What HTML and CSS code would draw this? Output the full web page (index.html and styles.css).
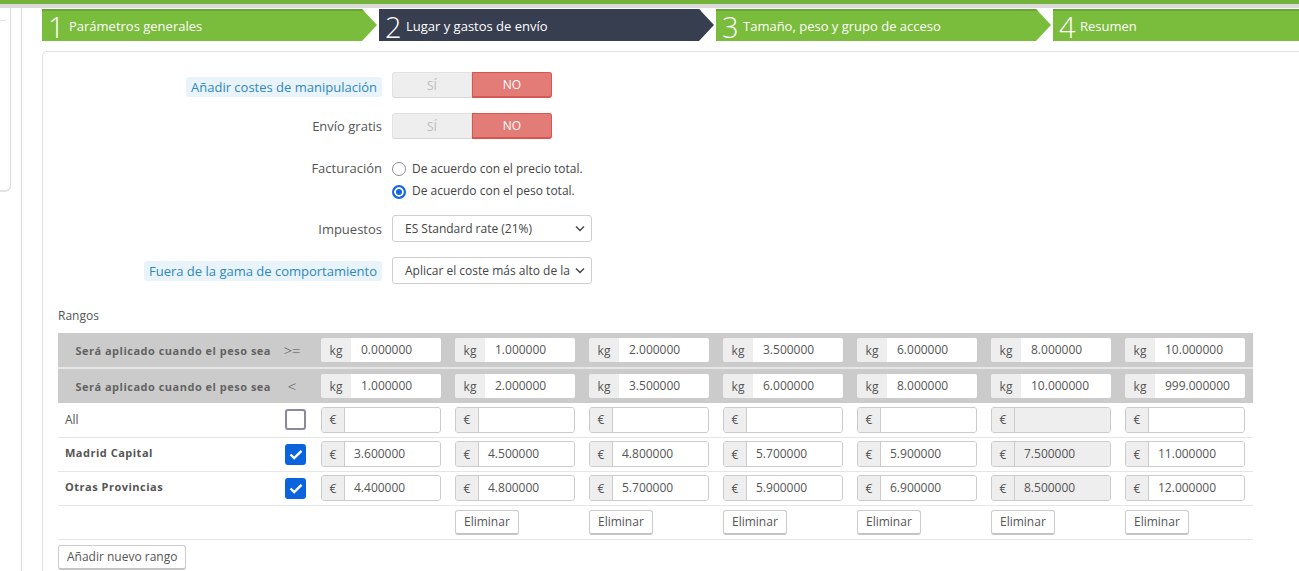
FILE: index.html
```html
<!DOCTYPE html>
<html lang="es">
<head>
<meta charset="utf-8">
<title>Transportista</title>
<link rel="stylesheet" href="styles.css">
</head>
<body>
<div class="topbar"></div>
<div class="page">
  <aside class="sidebar">
    <div class="side-panel"><div class="side-line"></div></div>
    <div class="side-rule"></div>
  </aside>
  <main class="main">
    <nav class="steps">
      <div class="step"><span class="num">1</span><span class="stxt">Parámetros generales</span></div>
      <div class="step active"><span class="num">2</span><span class="stxt">Lugar y gastos de envío</span></div>
      <div class="step"><span class="num">3</span><span class="stxt">Tamaño, peso y grupo de acceso</span></div>
      <div class="step last"><span class="num">4</span><span class="stxt">Resumen</span></div>
    </nav>
    <section class="panel">
      <div class="form">
        <div class="row r-toggle1">
          <div class="lbl"><span class="hint">Añadir costes de manipulación</span></div>
          <div class="ctl"><div class="toggle"><span class="yes">SÍ</span><span class="no">NO</span></div></div>
        </div>
        <div class="row r-toggle2">
          <div class="lbl">Envío gratis</div>
          <div class="ctl"><div class="toggle"><span class="yes">SÍ</span><span class="no">NO</span></div></div>
        </div>
        <div class="row r-billing">
          <div class="lbl lbl-top">Facturación</div>
          <div class="ctl">
            <div class="radio"><span class="dot"></span><span>De acuerdo con el precio total.</span></div>
            <div class="radio"><span class="dot on"></span><span>De acuerdo con el peso total.</span></div>
          </div>
        </div>
        <div class="row r-tax">
          <div class="lbl">Impuestos</div>
          <div class="ctl"><div class="select"><span>ES Standard rate (21%)</span><svg width="10" height="7" viewBox="0 0 10 7"><path d="M1 1.5 L5 5.5 L9 1.5" fill="none" stroke="#444" stroke-width="1.4"/></svg></div></div>
        </div>
        <div class="row r-range">
          <div class="lbl"><span class="hint">Fuera de la gama de comportamiento</span></div>
          <div class="ctl"><div class="select"><span>Aplicar el coste más alto de la</span><svg width="10" height="7" viewBox="0 0 10 7"><path d="M1 1.5 L5 5.5 L9 1.5" fill="none" stroke="#444" stroke-width="1.4"/></svg></div></div>
        </div>
      </div>

      <div class="ranges">
        <div class="rangos">Rangos</div>
        <table class="rtable">
          <colgroup>
            <col class="c-name"><col class="c-op">
            <col class="c-val"><col class="c-val"><col class="c-val"><col class="c-val"><col class="c-val"><col class="c-val"><col class="c-val">
          </colgroup>
          <thead>
            <tr class="hrow first">
              <td class="hlabel">Será aplicado cuando el peso sea</td>
              <td class="op">&gt;=</td>
              <td><div class="kg"><span class="add">kg</span><span class="val">0.000000</span></div></td>
              <td><div class="kg"><span class="add">kg</span><span class="val">1.000000</span></div></td>
              <td><div class="kg"><span class="add">kg</span><span class="val">2.000000</span></div></td>
              <td><div class="kg"><span class="add">kg</span><span class="val">3.500000</span></div></td>
              <td><div class="kg"><span class="add">kg</span><span class="val">6.000000</span></div></td>
              <td><div class="kg"><span class="add">kg</span><span class="val">8.000000</span></div></td>
              <td><div class="kg"><span class="add">kg</span><span class="val">10.000000</span></div></td>
            </tr>
            <tr class="hrow second">
              <td class="hlabel">Será aplicado cuando el peso sea</td>
              <td class="op">&lt;</td>
              <td><div class="kg"><span class="add">kg</span><span class="val">1.000000</span></div></td>
              <td><div class="kg"><span class="add">kg</span><span class="val">2.000000</span></div></td>
              <td><div class="kg"><span class="add">kg</span><span class="val">3.500000</span></div></td>
              <td><div class="kg"><span class="add">kg</span><span class="val">6.000000</span></div></td>
              <td><div class="kg"><span class="add">kg</span><span class="val">8.000000</span></div></td>
              <td><div class="kg"><span class="add">kg</span><span class="val">10.000000</span></div></td>
              <td><div class="kg"><span class="add">kg</span><span class="val">999.000000</span></div></td>
            </tr>
          </thead>
          <tbody>
            <tr>
              <td class="zone">All</td>
              <td class="chk"><span class="box"></span></td>
              <td><div class="eur"><span class="add">€</span><span class="val"></span></div></td>
              <td><div class="eur"><span class="add">€</span><span class="val"></span></div></td>
              <td><div class="eur"><span class="add">€</span><span class="val"></span></div></td>
              <td><div class="eur"><span class="add">€</span><span class="val"></span></div></td>
              <td><div class="eur"><span class="add">€</span><span class="val"></span></div></td>
              <td><div class="eur dis"><span class="add">€</span><span class="val"></span></div></td>
              <td><div class="eur"><span class="add">€</span><span class="val"></span></div></td>
            </tr>
            <tr>
              <td class="zone bold">Madrid Capital</td>
              <td class="chk"><span class="box on"><svg width="14" height="11" viewBox="0 0 14 11"><path d="M1.5 5.5 L5.2 9 L12.5 1.8" fill="none" stroke="#fff" stroke-width="2.4"/></svg></span></td>
              <td><div class="eur"><span class="add">€</span><span class="val">3.600000</span></div></td>
              <td><div class="eur"><span class="add">€</span><span class="val">4.500000</span></div></td>
              <td><div class="eur"><span class="add">€</span><span class="val">4.800000</span></div></td>
              <td><div class="eur"><span class="add">€</span><span class="val">5.700000</span></div></td>
              <td><div class="eur"><span class="add">€</span><span class="val">5.900000</span></div></td>
              <td><div class="eur dis"><span class="add">€</span><span class="val">7.500000</span></div></td>
              <td><div class="eur"><span class="add">€</span><span class="val">11.000000</span></div></td>
            </tr>
            <tr>
              <td class="zone bold">Otras Provincias</td>
              <td class="chk"><span class="box on"><svg width="14" height="11" viewBox="0 0 14 11"><path d="M1.5 5.5 L5.2 9 L12.5 1.8" fill="none" stroke="#fff" stroke-width="2.4"/></svg></span></td>
              <td><div class="eur"><span class="add">€</span><span class="val">4.400000</span></div></td>
              <td><div class="eur"><span class="add">€</span><span class="val">4.800000</span></div></td>
              <td><div class="eur"><span class="add">€</span><span class="val">5.700000</span></div></td>
              <td><div class="eur"><span class="add">€</span><span class="val">5.900000</span></div></td>
              <td><div class="eur"><span class="add">€</span><span class="val">6.900000</span></div></td>
              <td><div class="eur dis"><span class="add">€</span><span class="val">8.500000</span></div></td>
              <td><div class="eur"><span class="add">€</span><span class="val">12.000000</span></div></td>
            </tr>
            <tr>
              <td></td>
              <td></td>
              <td></td>
              <td><span class="btn">Eliminar</span></td>
              <td><span class="btn">Eliminar</span></td>
              <td><span class="btn">Eliminar</span></td>
              <td><span class="btn">Eliminar</span></td>
              <td><span class="btn">Eliminar</span></td>
              <td><span class="btn">Eliminar</span></td>
            </tr>
          </tbody>
        </table>
        <div class="add-range"><span class="btn">Añadir nuevo rango</span></div>
      </div>
    </section>
  </main>
</div>
</body>
</html>
```

FILE: styles.css
```css
* { box-sizing: border-box; }
html, body { margin: 0; padding: 0; }
body {
  font-family: "Open Sans", "Liberation Sans", sans-serif;
  color: #555;
  background: #fff;
  overflow: hidden;
  width: 1299px;
  height: 571px;
}

.topbar {
  height: 8px;
  background: #72b13a;
  border-bottom: 4px solid #dadada;
}

.page {
  display: flex;
  height: 563px;
}

.sidebar {
  width: 42px;
  flex: 0 0 42px;
  display: flex;
  align-items: flex-start;
}
.side-panel {
  width: 11px;
  height: 184px;
  border-right: 1px solid #dcdcdc;
  border-bottom: 2px solid #e2e2e2;
  border-radius: 0 0 6px 0;
  padding-top: 12px;
}
.side-line { width: 6px; height: 1px; background: #e2e2e2; }
.side-rule {
  margin-left: 10px;
  width: 1px;
  align-self: stretch;
  background: #dcdcdc;
}

.main {
  flex: 0 0 1300px;
  padding-top: 1px;
}

.steps {
  display: flex;
  gap: 2px;
  height: 32px;
}
.step {
  width: 335px;
  flex: 0 0 335px;
  height: 32px;
  background: #7abc3b;
  border-top: 2px solid #67a335;
  color: #fff;
  display: flex;
  align-items: center;
  padding-left: 6px;
  clip-path: polygon(0 0, calc(100% - 15px) 0, 100% 50%, calc(100% - 15px) 100%, 0 100%);
}
.step.active { background: #373e50; border-top-color: #373e50; }
.step.last { flex: 0 0 300px; clip-path: none; }
.num {
  font-size: 29px;
  font-weight: 300;
  line-height: 30px;
  width: 21px;
  margin-top: 1px;
}
.stxt { font-size: 13px; line-height: 18px; }

.panel {
  margin-top: 10px;
  width: 1300px;
  height: 530px;
  border: 1px solid #e0e0e0;
  border-radius: 5px;
}

.form { padding-top: 20px; }
.row {
  display: grid;
  grid-template-columns: 339px 220px;
  column-gap: 10px;
  align-items: center;
  font-size: 13px;
}
.lbl { text-align: right; color: #555; }
.hint {
  display: inline-block;
  background: #e8f3fa;
  color: #2f88bb;
  padding: 0 5px;
  line-height: 20px;
  border-radius: 3px;
}
.r-toggle1 { height: 26px; margin-bottom: 15px; }
.r-toggle1 .hint { margin-top: 4px; }
.r-toggle2 { height: 26px; margin-bottom: 18px; }
.r-billing { align-items: start; margin-bottom: 13px; }
.lbl-top { line-height: 22px; }
.r-tax { height: 27px; margin-bottom: 15px; }
.r-range { height: 27px; }

.toggle {
  display: flex;
  width: 160px;
  height: 26px;
  font-size: 12px;
}
.toggle span {
  flex: 1;
  display: flex;
  align-items: center;
  justify-content: center;
}
.toggle .yes {
  background: #eeeeee;
  color: #bcbcbc;
  border: 1px solid #e2e2e2;
  border-bottom-color: #d6d6d6;
  border-radius: 3px 0 0 3px;
}
.toggle .no {
  background: #e37b76;
  color: #fff;
  border: 1px solid #d85650;
  border-bottom-width: 2px;
  border-radius: 0 3px 3px 0;
}

.radio {
  display: flex;
  align-items: center;
  height: 22px;
  font-size: 12px;
  color: #444;
}
.radio + .radio { height: 23px; }
.dot {
  width: 14px;
  height: 14px;
  border-radius: 50%;
  border: 1.5px solid #8d8d9a;
  margin-right: 6px;
  margin-top: 2px;
  flex: 0 0 14px;
}
.dot.on {
  border: 2px solid #1266e0;
  background: #1266e0;
  box-shadow: inset 0 0 0 2px #fff;
}

.select {
  width: 200px;
  height: 27px;
  border: 1px solid #cfcfcf;
  border-radius: 3px;
  display: flex;
  align-items: center;
  justify-content: space-between;
  padding: 0 6px 0 12px;
  font-size: 12px;
  color: #444;
  white-space: nowrap;
  overflow: hidden;
}

.ranges { padding-left: 15px; }
.rangos {
  margin-top: 24px;
  font-size: 12px;
  line-height: 16px;
  color: #555;
  margin-bottom: 9px;
}

.rtable {
  border-collapse: collapse;
  table-layout: fixed;
  width: 1195px;
  font-size: 12px;
}
.c-name { width: 217px; }
.c-op { width: 40px; }
.c-val { width: 134px; }
.rtable td { padding: 0; vertical-align: middle; }

.hrow td { background: #cbcbcb; height: 35px; }
.hrow.first td { border-bottom: 2px solid #e6e6e6; height: 35px; }
.hlabel {
  text-align: right;
  padding-right: 4px !important;
  font-size: 11px;
  font-weight: 700;
  color: #636363;
  letter-spacing: 0.5px;
  white-space: nowrap;
}
.op { text-align: center; font-size: 15px; color: #555; font-weight: 300; padding-right: 6px !important; }

.kg {
  display: flex;
  width: 120px;
  height: 24px;
  margin-left: 6px;
  border-radius: 2px;
  overflow: hidden;
}
.kg .add {
  width: 30px;
  background: #eeeeee;
  display: flex;
  align-items: center;
  justify-content: center;
}
.kg .val {
  flex: 1;
  background: #fff;
  padding-left: 10px;
  line-height: 24px;
}

tbody td { height: 34px; border-bottom: 1px solid #e6e6e6; }
.zone { padding-left: 7px !important; color: #555; }
.zone.bold { font-weight: 700; font-size: 11px; letter-spacing: 0.5px; padding-bottom: 4px !important; }
.chk { padding-left: 10px !important; }
.box {
  display: flex;
  width: 21px;
  height: 21px;
  border: 2px solid #8a8a99;
  border-radius: 3px;
  align-items: center;
  justify-content: center;
}
.box.on { background: #0c63de; border-color: #0c63de; }

.eur {
  display: flex;
  width: 120px;
  height: 26px;
  margin-left: 6px;
  border: 1px solid #cccccc;
  border-radius: 3px;
  overflow: hidden;
}
.eur .add {
  width: 23px;
  background: #eeeeee;
  border-right: 1px solid #cccccc;
  display: flex;
  align-items: center;
  justify-content: center;
}
.eur .val { flex: 1; padding-left: 9px; line-height: 24px; background: #fff; }
.eur.dis .val { background: #eeeeee; }

.btn {
  display: inline-block;
  height: 25px;
  line-height: 22px;
  padding: 0 8px;
  border: 1px solid #cccccc;
  border-bottom: 2px solid #c4c4c4;
  border-radius: 3px;
  background: #fff;
  font-size: 12px;
  color: #555;
  margin-left: 6px;
  white-space: nowrap;
}
.add-range { margin-top: 4px; }
.add-range .btn { margin-left: 0; }
```
